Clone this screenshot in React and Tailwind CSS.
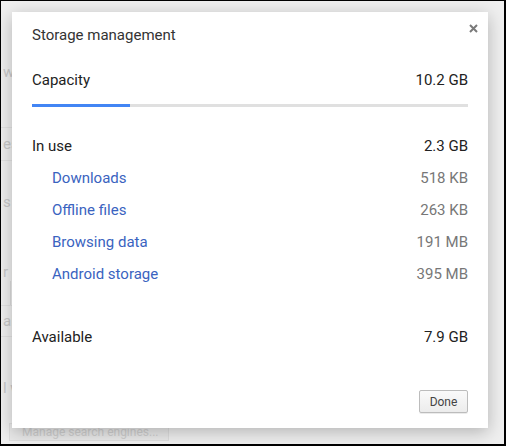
import React from 'react';

const items = [
    { label: 'Downloads', size: '518 KB' },
    { label: 'Offline files', size: '263 KB' },
    { label: 'Browsing data', size: '191 MB' },
    { label: 'Android storage', size: '395 MB' },
];

function Background() {
    return (
        <div className="flex flex-col text-[15px] text-[#c8c8c8]">
            <div className="h-[60px]" />
            <div className="h-[20px] pl-[2px]">w</div>
            <div className="h-[46px]" />
            <div className="h-[34px] w-[12px] border-y border-[#e2e2e2] pl-[2px] leading-[32px]">es</div>
            <div className="h-[30px]" />
            <div className="h-[20px] pl-[2px]">s</div>
            <div className="h-[50px]" />
            <div className="h-[20px] pl-[2px]">r c</div>
            <div className="h-[24px] w-[10px] border-r border-[#dcdcdc]" />
            <div className="h-[32px] w-[12px] border-y border-[#e2e2e2] pl-[2px] leading-[30px]">al</div>
            <div className="h-[40px]" />
            <div className="h-[20px] pl-[2px]">l w</div>
            <div className="mt-[26px] ml-[8px] h-[18px] w-[160px] whitespace-nowrap border border-[#dedede] bg-[#e9e9e9] pl-[12px] text-[12px] leading-[16px] text-[#cfcfcf]">
                Manage search engines...
            </div>
        </div>
    );
}

export default function App() {
    return (
        <div
            className="relative h-[446px] w-[506px] overflow-hidden border-t border-l border-r-2 border-b-2 border-black bg-[#efefef]"
            style={{ fontFamily: 'Roboto, "Liberation Sans", sans-serif' }}
        >
            <Background />

            {/* Dialog */}
            <div className="absolute left-[11px] top-[11px] flex h-[416px] w-[476px] flex-col bg-white px-[20px] pt-[13px] shadow-[0_4px_16px_rgba(0,0,0,0.25)]">
                <button className="absolute right-[10px] top-[11px] flex h-[10px] w-[10px] items-center justify-center">
                    <svg width="9" height="9" viewBox="0 0 9 9">
                        <path d="M1 1 L8 8 M8 1 L1 8" stroke="#7a7a7a" strokeWidth="2" />
                    </svg>
                </button>

                <h1 className="h-[20px] text-[15px] leading-[20px] text-[#333]">Storage management</h1>

                <div className="mt-[25px] flex h-[20px] items-center justify-between text-[15px] text-[#222]">
                    <span>Capacity</span>
                    <span>10.2 GB</span>
                </div>

                <div className="mt-[14px] h-[3px] w-full bg-[#e0e0e0]">
                    <div className="h-full w-[98px] bg-[#4285f4]" />
                </div>

                <div className="mt-[23px] flex h-[32px] items-center justify-between text-[15px] text-[#222]">
                    <span>In use</span>
                    <span>2.3 GB</span>
                </div>

                {items.map((item) => (
                    <div key={item.label} className="flex h-[32px] items-center justify-between pl-[20px] text-[15px]">
                        <span className="text-[#3a63c0]">{item.label}</span>
                        <span className="text-[#777]">{item.size}</span>
                    </div>
                ))}

                <div className="mt-[31px] flex h-[32px] items-center justify-between text-[15px] text-[#222]">
                    <span>Available</span>
                    <span>7.9 GB</span>
                </div>

                <div className="mt-[37px] flex justify-end">
                    <button className="h-[23px] w-[49px] rounded-[2px] border border-[#bcbcbc] bg-gradient-to-b from-[#fafafa] to-[#ececec] text-[12px] text-[#444] shadow-[0_1px_0_rgba(0,0,0,0.08)]">
                        Done
                    </button>
                </div>
            </div>
        </div>
    );
}
